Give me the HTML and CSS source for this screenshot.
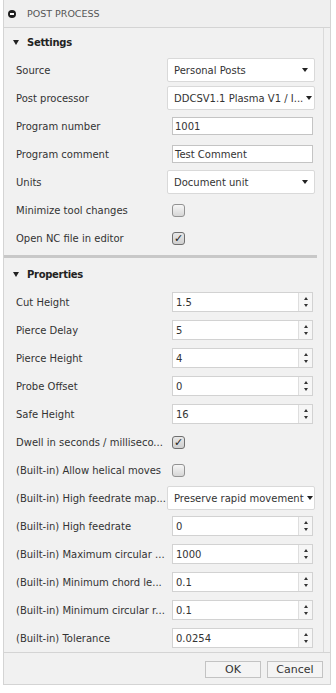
FILE: index.html
```html
<!DOCTYPE html>
<html lang="en">
<head>
  <meta charset="UTF-8" />
  <meta name="viewport" content="width=device-width, initial-scale=1.0" />
  <title>Post Process</title>
  <link rel="stylesheet" href="styles.css">
</head>
<body>
  <div class="dialog">
    <div class="titlebar">
      <span class="title-icon"></span>
      <span class="title">POST PROCESS</span>
    </div>

    <div class="content">
      <div class="group">
        <div class="group-head"><span class="tri"></span>Settings</div>
        <div class="row"><span class="label">Source</span>
          <div class="select"><span>Personal Posts</span><span class="caret"></span></div></div>
        <div class="row"><span class="label">Post processor</span>
          <div class="select"><span>DDCSV1.1 Plasma V1 / I...</span><span class="caret"></span></div></div>
        <div class="row"><span class="label">Program number</span>
          <div class="text">1001</div></div>
        <div class="row"><span class="label">Program comment</span>
          <div class="text">Test Comment</div></div>
        <div class="row"><span class="label">Units</span>
          <div class="select"><span>Document unit</span><span class="caret"></span></div></div>
        <div class="row"><span class="label">Minimize tool changes</span>
          <div class="check"></div></div>
        <div class="row"><span class="label">Open NC file in editor</span>
          <div class="check on">&#10003;</div></div>
      </div>

      <div class="divider"></div>

      <div class="group">
        <div class="group-head"><span class="tri"></span>Properties</div>
        <div class="row"><span class="label">Cut Height</span>
          <div class="spin"><span class="val">1.5</span><span class="arrows"><i class="up"></i><i class="down"></i></span></div></div>
        <div class="row"><span class="label">Pierce Delay</span>
          <div class="spin"><span class="val">5</span><span class="arrows"><i class="up"></i><i class="down"></i></span></div></div>
        <div class="row"><span class="label">Pierce Height</span>
          <div class="spin"><span class="val">4</span><span class="arrows"><i class="up"></i><i class="down"></i></span></div></div>
        <div class="row"><span class="label">Probe Offset</span>
          <div class="spin"><span class="val">0</span><span class="arrows"><i class="up"></i><i class="down"></i></span></div></div>
        <div class="row"><span class="label">Safe Height</span>
          <div class="spin"><span class="val">16</span><span class="arrows"><i class="up"></i><i class="down"></i></span></div></div>
        <div class="row"><span class="label">Dwell in seconds / milliseco...</span>
          <div class="check on">&#10003;</div></div>
        <div class="row"><span class="label">(Built-in) Allow helical moves</span>
          <div class="check"></div></div>
        <div class="row"><span class="label">(Built-in) High feedrate map...</span>
          <div class="select"><span>Preserve rapid movement</span><span class="caret"></span></div></div>
        <div class="row"><span class="label">(Built-in) High feedrate</span>
          <div class="spin"><span class="val">0</span><span class="arrows"><i class="up"></i><i class="down"></i></span></div></div>
        <div class="row"><span class="label">(Built-in) Maximum circular ...</span>
          <div class="spin"><span class="val">1000</span><span class="arrows"><i class="up"></i><i class="down"></i></span></div></div>
        <div class="row"><span class="label">(Built-in) Minimum chord le...</span>
          <div class="spin"><span class="val">0.1</span><span class="arrows"><i class="up"></i><i class="down"></i></span></div></div>
        <div class="row"><span class="label">(Built-in) Minimum circular r...</span>
          <div class="spin"><span class="val">0.1</span><span class="arrows"><i class="up"></i><i class="down"></i></span></div></div>
        <div class="row"><span class="label">(Built-in) Tolerance</span>
          <div class="spin"><span class="val">0.0254</span><span class="arrows"><i class="up"></i><i class="down"></i></span></div></div>
      </div>
    </div>

    <div class="footer">
      <div class="btn">OK</div>
      <div class="btn">Cancel</div>
    </div>
  </div>
</body>
</html>
```

FILE: styles.css
```css
body {
  margin: 0;
  background: #ffffff;
  font-family: 'DejaVu Sans', 'Liberation Sans', sans-serif;
  font-size: 10px;
  color: #333;
}
.dialog {
  margin-left: 3px;
  width: 326px;
  border: 1px solid #d4d4d4;
  border-top: none;
  background: #f1f1f1;
}
.titlebar {
  height: 27px;
  display: flex;
  align-items: center;
  border-bottom: 1px solid #d4d4d4;
  background: #efefef;
}
.title-icon {
  position: relative;
  width: 8px;
  height: 8px;
  margin-left: 4px;
  border-radius: 50%;
  background: #1e1e1e;
}
.title-icon::after {
  content: '';
  position: absolute;
  left: 2px;
  top: 3px;
  width: 4px;
  height: 2px;
  background: #fff;
}
.title {
  margin-left: 11px;
  color: #555;
  font-size: 9.5px;
}
.content {
  border-right: 1px solid #dadada;
  margin-right: 6px;
}
.group-head {
  height: 28px;
  display: flex;
  align-items: center;
  padding-left: 9px;
  font-weight: bold;
  letter-spacing: -0.3px;
  color: #222;
}
.tri {
  width: 0;
  height: 0;
  border-left: 3px solid transparent;
  border-right: 3px solid transparent;
  border-top: 5px solid #222;
  margin-right: 8px;
}
.row {
  height: 28px;
  display: flex;
  align-items: center;
  padding-left: 12px;
}
.label {
  width: 151px;
  flex: none;
  white-space: nowrap;
  overflow: hidden;
  text-overflow: ellipsis;
}
.select {
  width: 148px;
  height: 24px;
  display: flex;
  align-items: center;
  justify-content: space-between;
  padding: 0 6px 0 6px;
  box-sizing: border-box;
  background: #fff;
  border: 1px solid #d9d9d9;
  border-radius: 2px;
  white-space: nowrap;
  overflow: hidden;
}
.caret {
  flex: none;
  width: 0;
  height: 0;
  margin-left: 3px;
  border-left: 3px solid transparent;
  border-right: 3px solid transparent;
  border-top: 4px solid #222;
}
.text {
  width: 141px;
  height: 18px;
  margin-left: 5px;
  box-sizing: border-box;
  padding: 0 2px;
  display: flex;
  align-items: center;
  background: #fff;
  border: 1px solid #c4c4c4;
}
.spin {
  width: 141px;
  height: 20px;
  margin-left: 5px;
  display: flex;
  box-sizing: border-box;
  background: #fff;
  border: 1px solid #d2d2d2;
}
.val {
  flex: 1;
  display: flex;
  align-items: center;
  padding-left: 3px;
}
.arrows {
  width: 13px;
  display: flex;
  flex-direction: column;
  justify-content: center;
  gap: 4px;
  border-left: 1px solid #dedede;
  background: #f6f6f6;
}
.arrows i {
  align-self: center;
  width: 0;
  height: 0;
  border-left: 2px solid transparent;
  border-right: 2px solid transparent;
}
.arrows .up {
  border-bottom: 3px solid #333;
}
.arrows .down {
  border-top: 3px solid #333;
}
.check {
  width: 11px;
  height: 11px;
  margin-left: 5px;
  display: flex;
  align-items: center;
  justify-content: center;
  border: 1px solid #929292;
  border-radius: 3px;
  background: linear-gradient(#f6f6f6, #d6d6d6);
  font-size: 11px;
  color: #222;
  line-height: 1;
}
.check.on {
  border-color: #6f6f6f;
  background: linear-gradient(#e8e8e8, #cfcfcf);
}
.divider {
  height: 3px;
  margin: 3px 6px 2px 0;
  background: #c8c8c8;
}
.footer {
  height: 32px;
  display: flex;
  justify-content: flex-end;
  align-items: flex-start;
  gap: 6px;
  padding-top: 8px;
  padding-right: 7px;
  box-sizing: border-box;
  border-top: 1px solid #d4d4d4;
}
.btn {
  width: 54px;
  height: 15px;
  display: flex;
  align-items: center;
  justify-content: center;
  background: #f4f4f4;
  border: 1px solid #c3c3c3;
  color: #333;
  font-size: 11px;
}
```
